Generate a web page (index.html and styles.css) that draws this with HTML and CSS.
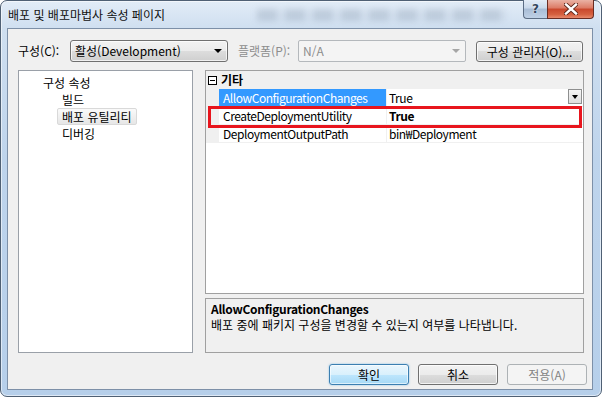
FILE: index.html
```html
<!DOCTYPE html>
<html lang="ko">
<head>
    <meta charset="UTF-8">
    <title>배포 및 배포마법사 속성 페이지</title>
    <link rel="stylesheet" href="styles.css">
</head>
<body>
    <div class="window">
        <div class="titlebar">
            <span class="title">배포 및 배포마법사 속성 페이지</span>
            <div class="ghost" aria-hidden="true"></div>
            <div class="caption-buttons">
                <span class="cap-btn help">?</span>
                <span class="cap-btn close">
                    <svg width="14" height="12" viewBox="0 0 14 12">
                        <path d="M2 1.5 L12 10.5 M12 1.5 L2 10.5" stroke="#5a2418" stroke-width="4.2" stroke-linecap="square" fill="none"/>
                        <path d="M2 1.5 L12 10.5 M12 1.5 L2 10.5" stroke="#ffffff" stroke-width="2.4" stroke-linecap="square" fill="none"/>
                    </svg>
                </span>
            </div>
        </div>

        <div class="client">
            <div class="toolbar">
                <span class="field-label config-label">구성(C):</span>
                <div class="combo config">활성(Development)<span class="arrow"></span></div>
                <span class="field-label platform-label disabled">플랫폼(P):</span>
                <div class="combo platform disabled">N/A<span class="arrow"></span></div>
                <button class="btn manager">구성 관리자(O)...</button>
            </div>

            <div class="main">
                <div class="tree">
                    <div class="tree-item root">구성 속성</div>
                    <div class="tree-item child">빌드</div>
                    <div class="tree-item child selected">배포 유틸리티</div>
                    <div class="tree-item child">디버깅</div>
                </div>

                <div class="right">
                    <div class="grid">
                        <div class="category">
                            <span class="toggle"></span>
                            <span class="category-name">기타</span>
                        </div>
                        <div class="prop-row">
                            <span class="margin"></span>
                            <span class="prop-name active">AllowConfigurationChanges</span>
                            <span class="prop-value">True<span class="drop-btn"></span></span>
                        </div>
                        <div class="prop-row">
                            <span class="margin"></span>
                            <span class="prop-name">CreateDeploymentUtility</span>
                            <span class="prop-value bold">True</span>
                        </div>
                        <div class="prop-row">
                            <span class="margin"></span>
                            <span class="prop-name">DeploymentOutputPath</span>
                            <span class="prop-value">bin₩Deployment</span>
                        </div>
                        <div class="highlight"></div>
                    </div>

                    <div class="desc">
                        <div class="desc-title">AllowConfigurationChanges</div>
                        <div class="desc-text">배포 중에 패키지 구성을 변경할 수 있는지 여부를 나타냅니다.</div>
                    </div>
                </div>
            </div>

            <div class="footer">
                <button class="btn default">확인</button>
                <button class="btn">취소</button>
                <button class="btn disabled">적용(A)</button>
            </div>
        </div>
    </div>
</body>
</html>
```

FILE: styles.css
```css
body {
    margin: 0;
    padding: 0;
    width: 602px;
    height: 397px;
    overflow: hidden;
    font-family: "Noto Sans CJK KR", "Noto Sans", sans-serif;
    font-size: 12px;
    color: #000;
    background: #fff;
}

.window {
    position: relative;
    box-sizing: border-box;
    width: 602px;
    height: 397px;
    padding: 0 8px 6px 6px;
    border: 1px solid #4f6074;
    border-radius: 7px;
    background: linear-gradient(180deg, #e2ecf7 0%, #cfdff0 7%, #bed4ec 40%, #b6cfea 100%);
    box-shadow: inset 0 0 0 1px rgba(255, 255, 255, 0.55);
}

/* title bar */

.titlebar {
    position: relative;
    display: flex;
    align-items: center;
    height: 27px;
}

.title {
    padding-left: 1px;
    padding-top: 1px;
    line-height: 16px;
    color: #111;
}

.ghost {
    position: absolute;
    left: 250px;
    top: 8px;
    width: 250px;
    height: 12px;
    background: repeating-linear-gradient(90deg, rgba(70, 90, 115, 0.18) 0 20px, rgba(70, 90, 115, 0.04) 20px 28px);
    filter: blur(3px);
}

.caption-buttons {
    position: absolute;
    right: -1px;
    top: -1px;
    display: flex;
}

.cap-btn {
    box-sizing: border-box;
    height: 19px;
    display: flex;
    align-items: center;
    justify-content: center;
    border: 1px solid #5c6d84;
    border-top: none;
}

.help {
    width: 24px;
    border-right: none;
    border-radius: 0 0 0 4px;
    background: linear-gradient(180deg, #e3ecf6 0%, #c9d8ea 45%, #a8bcd5 50%, #bfd1e6 100%);
    color: #33465c;
    font-family: "DejaVu Sans", sans-serif;
    font-weight: bold;
    font-size: 12px;
    text-shadow: 0 0 2px #fff;
}

.close {
    width: 47px;
    border-color: #6a2c22;
    border-radius: 0 0 4px 0;
    background: linear-gradient(180deg, #eab2a4 0%, #dc7a64 45%, #c9472c 50%, #d5603f 80%, #e88a6c 100%);
}

/* client area */

.client {
    box-sizing: border-box;
    width: 586px;
    height: 362px;
    padding: 11px 8px 4px 10px;
    border: 1px solid #7d90a8;
    background: #f0f0f0;
}

.toolbar {
    display: flex;
    align-items: center;
    height: 22px;
    margin-bottom: 8px;
}

.field-label {
    line-height: 16px;
    white-space: nowrap;
}

.config-label {
    width: 52px;
}

.platform-label {
    width: 60px;
    margin-left: 10px;
}

.disabled {
    color: #8d8d8d;
}

.combo {
    position: relative;
    box-sizing: border-box;
    height: 22px;
    line-height: 20px;
    padding-left: 4px;
    border-radius: 3px;
    white-space: nowrap;
}

.combo.config {
    width: 158px;
    border: 1px solid #707070;
    background: linear-gradient(180deg, #f2f2f2 0%, #ebebeb 50%, #dddddd 50%, #cfcfcf 100%);
    box-shadow: inset 0 0 0 1px rgba(255, 255, 255, 0.7);
}

.combo.platform {
    width: 168px;
    border: 1px solid #b4b8bc;
    border-radius: 2px;
    background: #f4f4f4;
}

.arrow {
    position: absolute;
    right: 5px;
    top: 8px;
    width: 0;
    height: 0;
    border-left: 4px solid transparent;
    border-right: 4px solid transparent;
    border-top: 4px solid #000;
}

.platform .arrow {
    border-top-color: #a6a6a6;
}

.btn {
    box-sizing: border-box;
    height: 21px;
    padding: 0;
    font-family: inherit;
    font-size: 12px;
    color: #000;
    border: 1px solid #707070;
    border-radius: 3px;
    background: linear-gradient(180deg, #f2f2f2 0%, #ebebeb 50%, #dddddd 50%, #cfcfcf 100%);
    box-shadow: inset 0 0 0 1px rgba(255, 255, 255, 0.75);
}

.btn.manager {
    width: 107px;
    margin-left: 10px;
}

.btn.default {
    border-color: #3c7fb1;
    background: linear-gradient(180deg, #eaf6fd 0%, #d9f0fc 50%, #bee6fd 50%, #a7d9f5 100%);
    box-shadow: inset 0 0 0 1px rgba(255, 255, 255, 0.6), 0 0 2px rgba(80, 170, 230, 0.7);
}

.btn.disabled {
    color: #838383;
    border-color: #adb2b5;
    background: #f4f4f4;
    box-shadow: none;
}

/* main area */

.main {
    display: flex;
    gap: 12px;
    height: 283px;
}

.tree {
    box-sizing: border-box;
    width: 175px;
    padding-top: 3px;
    border: 1px solid #9aa0a8;
    background: #fff;
}

.tree-item {
    line-height: 17px;
    white-space: nowrap;
}

.tree-item.root {
    padding-left: 24px;
}

.tree-item.child {
    box-sizing: border-box;
    width: fit-content;
    margin-left: 38px;
    padding: 0 4px;
    border: 1px solid transparent;
    line-height: 15px;
    height: 17px;
}

.tree-item.selected {
    border-color: #d9d9d9;
    border-radius: 2px;
    background: linear-gradient(180deg, #fafafa 0%, #e6e6e6 100%);
}

.right {
    display: flex;
    flex-direction: column;
    gap: 4px;
    width: 379px;
}

.grid {
    position: relative;
    box-sizing: border-box;
    height: 224px;
    border: 1px solid #a0a0a0;
    background: #fff;
}

.category {
    display: flex;
    align-items: center;
    height: 18px;
    background: #f0f0f0;
}

.toggle {
    position: relative;
    box-sizing: border-box;
    width: 9px;
    height: 9px;
    margin-left: 2px;
    margin-right: 4px;
    border: 1px solid #000;
    background: #fff;
}

.toggle::after {
    content: "";
    position: absolute;
    left: 1px;
    top: 3px;
    width: 5px;
    height: 1px;
    background: #000;
}

.category-name {
    font-weight: bold;
    line-height: 16px;
}

.prop-row {
    display: grid;
    grid-template-columns: 13px 168px 1fr;
    height: 18px;
}

.margin {
    background: #f0f0f0;
}

.prop-name,
.prop-value {
    box-sizing: border-box;
    line-height: 17px;
    border-bottom: 1px solid #f0f0f0;
    white-space: nowrap;
    letter-spacing: -0.45px;
}

.prop-name {
    padding-left: 4px;
    border-right: 1px solid #f0f0f0;
}

.prop-name.active {
    color: #fff;
    background: #3399ff;
}

.prop-value {
    position: relative;
    padding-left: 2px;
}

.prop-value.bold {
    font-weight: bold;
}

.drop-btn {
    position: absolute;
    right: 1px;
    top: 0;
    box-sizing: border-box;
    width: 14px;
    height: 15px;
    border: 1px solid #8e8f8f;
    background: linear-gradient(180deg, #f6f6f6 0%, #dedede 100%);
}

.drop-btn::after {
    content: "";
    position: absolute;
    left: 3px;
    top: 5px;
    border-left: 3px solid transparent;
    border-right: 3px solid transparent;
    border-top: 4px solid #000;
}

.highlight {
    position: absolute;
    left: 2px;
    top: 35px;
    box-sizing: border-box;
    width: 374px;
    height: 22px;
    border: 3px solid #e8151d;
}

.desc {
    box-sizing: border-box;
    height: 55px;
    padding: 1px 5px;
    border: 1px solid #a0a0a0;
    background: #f0f0f0;
}

.desc-title {
    font-weight: bold;
    line-height: 17px;
    letter-spacing: -0.3px;
}

.desc-text {
    line-height: 16px;
}

/* dialog buttons */

.footer {
    display: flex;
    justify-content: flex-end;
    gap: 9px;
    margin-top: 11px;
    margin-right: -3px;
}

.footer .btn {
    width: 80px;
}
```
